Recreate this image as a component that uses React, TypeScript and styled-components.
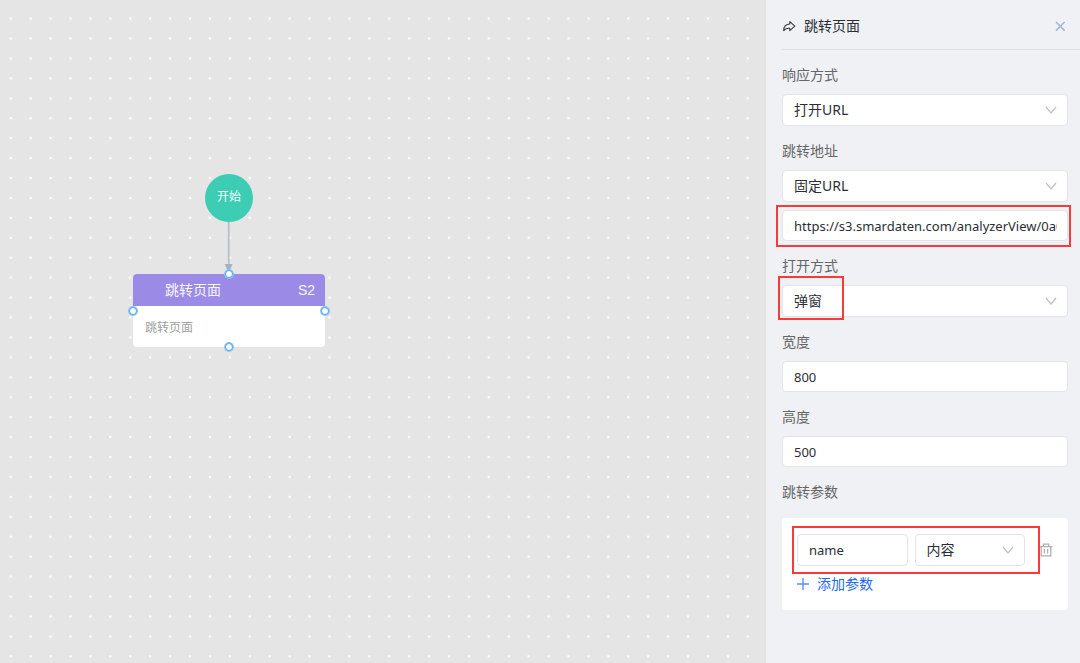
import React, { useId } from 'react';
import styled, { createGlobalStyle } from 'styled-components';

const GlobalStyle = createGlobalStyle`
  * { box-sizing: border-box; }
  body {
    margin: 0;
    font-family: 'Noto Sans', 'Noto Sans CJK SC', sans-serif;
    font-size: 14px;
    line-height: 22px;
    color: #2b2e36;
  }
  button, input, select { font: inherit; color: inherit; }
`;

const Page = styled.div`
  display: grid;
  grid-template-columns: minmax(0, 1fr) 314px;
  min-height: 100vh;
`;

const Canvas = styled.main`
  position: relative;
  overflow: hidden;
  background: #e5e5e5;
`;

const Dots = styled.svg`
  position: absolute;
  inset: 0;
  width: 100%;
  height: 100%;
`;

const StartNode = styled.div`
  position: absolute;
  left: 205px;
  top: 174px;
  width: 48px;
  height: 48px;
  padding-bottom: 2px;
  border-radius: 50%;
  display: flex;
  align-items: center;
  justify-content: center;
  background: #3dcdb4;
  color: #f0fffc;
  font-size: 12px;
`;

const Connector = styled.svg`
  position: absolute;
  left: 223px;
  top: 222px;
`;

const StepNode = styled.section`
  position: absolute;
  left: 133px;
  top: 274px;
  width: 192px;
`;

const StepBox = styled.div`
  border-radius: 4px;
  overflow: hidden;
  background: #fff;
`;

const StepHead = styled.header`
  display: flex;
  justify-content: space-between;
  align-items: center;
  height: 32px;
  padding: 0 10px 0 32px;
  background: #9b8ae6;
  color: #f8f6fe;
  font-family: 'Liberation Sans', 'Noto Sans CJK SC', sans-serif;
`;

const StepBody = styled.p`
  margin: 0;
  padding: 11px 12px 8px;
  color: #a0a0a0;
  font-size: 12px;
`;

const Port = styled.i<{ $side: 'top' | 'right' | 'bottom' | 'left' }>`
  position: absolute;
  width: 8px;
  height: 8px;
  border: 1px solid #4ea5f7;
  box-shadow: 0 0 0 1px #8cc4fa;
  border-radius: 50%;
  background: #fff;
  left: ${p => (p.$side === 'left' ? '0' : p.$side === 'right' ? '100%' : '50%')};
  top: ${p => (p.$side === 'top' ? '0' : p.$side === 'bottom' ? '100%' : '50%')};
  transform: translate(-50%, -50%);
`;

const Panel = styled.aside`
  padding-left: 16px;
  background: #eff1f5;
`;

const PanelHead = styled.header`
  display: flex;
  align-items: center;
  gap: 8px;
  height: 50px;
  padding: 2px 12px 0 0;
  border-bottom: 1px solid #e0e1e4;
`;

const PanelTitle = styled.h1`
  flex: 1;
  margin: 0;
  font-size: 14px;
  font-weight: 400;
`;

const IconButton = styled.button<{ $tone: string }>`
  display: flex;
  padding: 0;
  border: 0;
  background: none;
  color: ${p => p.$tone};
  cursor: pointer;
`;

const Form = styled.form`
  display: flex;
  flex-direction: column;
  gap: 14px;
  padding: 14px 12px 14px 0;
`;

const Field = styled.div`
  display: flex;
  flex-direction: column;
  gap: 8px;
`;

const Label = styled.label`
  color: #666;
`;

const ControlWrap = styled.div`
  position: relative;
  display: flex;
  flex: 1;
  min-width: 0;
`;

const TextInput = styled.input`
  width: 100%;
  min-width: 0;
  height: 31px;
  padding: 0 10px 0 11px;
  border: 1px solid #e2e4e8;
  border-radius: 4px;
  background: #fff;
  font-size: 13px;
  outline: none;
`;

const SelectInput = styled.select`
  appearance: none;
  width: 100%;
  min-width: 0;
  height: 32px;
  padding: 0 28px 1px 11px;
  border: 1px solid #e2e4e8;
  border-radius: 4px;
  background: #fff;
  outline: none;
`;

const Chevron = styled.svg`
  position: absolute;
  right: 11px;
  top: 12px;
  pointer-events: none;
`;

const Mark = styled.span<{ $inset: string; $width?: string }>`
  position: absolute;
  inset: ${p => p.$inset};
  width: ${p => p.$width ?? 'auto'};
  border: 2px solid #f83a3a;
  pointer-events: none;
  z-index: 1;
`;

const Card = styled.div`
  display: flex;
  flex-direction: column;
  align-items: stretch;
  gap: 7px;
  margin-top: 7px;
  padding: 16px 15px 15px;
  border-radius: 4px;
  background: #fff;
`;

const ParamRow = styled.div`
  display: flex;
  align-items: center;
  gap: 14px;
`;

const ParamFields = styled.div`
  position: relative;
  display: flex;
  flex: 1;
  gap: 7px;
  min-width: 0;

  ${TextInput} { height: 32px; }
`;

const AddButton = styled.button`
  display: flex;
  align-items: center;
  align-self: flex-start;
  gap: 8px;
  padding: 0;
  border: 0;
  background: none;
  color: #2468f2;
  cursor: pointer;
`;

function Select({ id, value, label }: { id?: string; value: string; label?: string }) {
  return (
    <>
      <SelectInput id={id} aria-label={label} defaultValue={value}>
        <option>{value}</option>
      </SelectInput>
      <Chevron width="12" height="9" viewBox="0 0 12 9" fill="none" stroke="#c0c2c7" strokeWidth="1.3">
        <path d="M1 1 6 7 11 1" />
      </Chevron>
    </>
  );
}

function SelectField({ label, value, mark, children }: {
  label: string; value: string; mark?: boolean; children?: React.ReactNode;
}) {
  const id = useId();
  return (
    <Field>
      <Label htmlFor={id}>{label}</Label>
      <ControlWrap>
        <Select id={id} value={value} />
        {mark && <Mark $inset="-9px auto -3px -4px" $width="66px" />}
      </ControlWrap>
      {children}
    </Field>
  );
}

function TextField({ label, value }: { label: string; value: string }) {
  const id = useId();
  return (
    <Field>
      <Label htmlFor={id}>{label}</Label>
      <TextInput id={id} defaultValue={value} />
    </Field>
  );
}

export default function App() {
  return (
    <>
      <GlobalStyle />
      <Page>
        <Canvas>
          <Dots aria-hidden="true">
            <defs>
              <pattern id="dots" x="0.8" y="8.6" width="19.92" height="19.93" patternUnits="userSpaceOnUse">
                <circle cx="9.96" cy="9.96" r="1.3" fill="#fcfcfc" />
              </pattern>
            </defs>
            <rect width="100%" height="100%" fill="url(#dots)" />
          </Dots>
          <StartNode>开始</StartNode>
          <Connector width="12" height="52" viewBox="0 0 12 52" aria-hidden="true">
            <path d="M5.7 0V44" stroke="#b4c0ca" strokeWidth="1.8" />
            <path d="M1.7 42H9.7L5.7 51Z" fill="#a5b3bf" />
          </Connector>
          <StepNode>
            <StepBox>
              <StepHead>
                <span>跳转页面</span>
                <span>S2</span>
              </StepHead>
              <StepBody>跳转页面</StepBody>
            </StepBox>
            <Port $side="top" />
            <Port $side="right" />
            <Port $side="bottom" />
            <Port $side="left" />
          </StepNode>
        </Canvas>

        <Panel>
          <PanelHead>
            <svg width="14" height="14" viewBox="0 0 14 14" fill="none" stroke="#33363d" strokeWidth="1.1" strokeLinejoin="round" aria-hidden="true">
              <path d="M7.8 2.6 12.8 7.2 7.8 11.6V9.4C5 9 3.4 9.6 1.8 11.6 1.2 7.6 4 5 7.8 5Z" />
            </svg>
            <PanelTitle>跳转页面</PanelTitle>
            <IconButton type="button" aria-label="关闭" $tone="#a3b5dc">
              <svg width="14" height="14" viewBox="0 0 14 14" fill="none" stroke="currentColor" strokeWidth="1.5">
                <path d="M2 3 10.6 11.6M10.6 3 2 11.6" />
              </svg>
            </IconButton>
          </PanelHead>
          <Form>
            <SelectField label="响应方式" value="打开URL" />
            <SelectField label="跳转地址" value="固定URL">
              <ControlWrap>
                <TextInput aria-label="URL" defaultValue="https://s3.smardaten.com/analyzerView/0a0" />
                <Mark $inset="-5px -3px -6px -6px" />
              </ControlWrap>
            </SelectField>
            <SelectField label="打开方式" value="弹窗" mark />
            <TextField label="宽度" value="800" />
            <TextField label="高度" value="500" />
            <Field>
              <Label as="div">跳转参数</Label>
              <Card>
                <ParamRow>
                  <ParamFields>
                    <ControlWrap>
                      <TextInput aria-label="参数名" defaultValue="name" />
                    </ControlWrap>
                    <ControlWrap>
                      <Select label="参数值" value="内容" />
                    </ControlWrap>
                    <Mark $inset="-8px -15px -8px -5px" />
                  </ParamFields>
                  <IconButton type="button" aria-label="删除" $tone="#b0b0b0">
                    <svg width="14" height="14" viewBox="0 0 14 14" fill="none" stroke="currentColor" strokeWidth="1.3">
                      <path d="M0.5 3.6H13.5M4.4 3.4V1.2H9.6V3.4M2.2 3.8V12.8H11.8V3.8M5.4 6V10.6M8.6 6V10.6" />
                    </svg>
                  </IconButton>
                </ParamRow>
                <AddButton type="button">
                  <svg width="12" height="12" viewBox="0 0 12 12" stroke="#5b8ef5" strokeWidth="1.4" aria-hidden="true">
                    <path d="M6 0V12M0 6H12" />
                  </svg>
                  添加参数
                </AddButton>
              </Card>
            </Field>
          </Form>
        </Panel>
      </Page>
    </>
  );
}
